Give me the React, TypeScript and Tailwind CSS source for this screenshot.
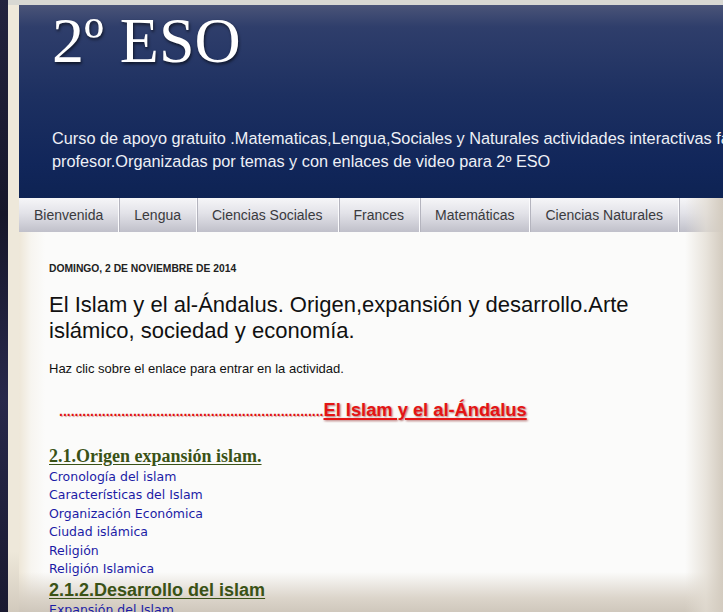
import * as React from "react";

// Menu tabs across the top of the blog
const tabs = ["Bienvenida", "Lengua", "Ciencias Sociales", "Frances", "Matemáticas", "Ciencias Naturales"];

// Activity links under the first heading
const links = [
  "Cronología del islam",
  "Características del Islam",
  "Organización Económica",
  "Ciudad islámica",
  "Religión",
  "Religión Islamica",
];

export default function App() {
  return (
    <div className="relative flex h-[612px] w-[723px] overflow-hidden bg-[#1b1b30] font-['Liberation_Sans',Arial,sans-serif]">
      {/* dark page background on the far left */}
      <div className="w-[8px] shrink-0 bg-[linear-gradient(to_bottom,#23233e,#17172a_35%,#28284a_65%,#1a1a30)]" />

      <div className="flex min-w-0 flex-1 flex-col">
        <div className="h-[5px] shrink-0 bg-[#d8d8d3]" />

        <div className="flex min-h-0 flex-1">
          {/* cream frame */}
          <div className="w-[11px] shrink-0 bg-[linear-gradient(to_bottom,#eee8da_90%,#d2cabd)]" />

          <div className="flex min-w-0 flex-1 flex-col">
            {/* Header */}
            <header className="h-[193px] shrink-0 overflow-hidden bg-[linear-gradient(to_bottom,#4a5478_0px,#2f3e6b_22px,#1d3061_90px,#11265a_160px,#0e2353)] pl-[33px]">
              <h1 className="pt-[4px] font-['Liberation_Serif','Times_New_Roman',serif] text-[64px] leading-[64px] text-white [text-shadow:1px_2px_3px_rgba(0,0,0,0.6)]">
                2º ESO
              </h1>
              <div className="mt-[54px] whitespace-nowrap text-[16.3px] leading-[23px] text-[#eef0f6]">
                <p>Curso de apoyo gratuito .Matematicas,Lengua,Sociales y Naturales actividades interactivas fáciles del</p>
                <p>profesor.Organizadas por temas y con enlaces de video para 2º ESO</p>
              </div>
            </header>

            {/* Navigation */}
            <nav className="flex h-[34px] shrink-0 bg-[linear-gradient(to_bottom,#f6f6f8,#e2e2e8_45%,#c0c0ca)]">
              {tabs.map((tab) => (
                <div
                  key={tab}
                  className="flex items-center border-r border-r-[#fbfbfd] px-[15px] text-[14px] text-[#3a3a3e] shadow-[1px_0_0_#b4b4be]"
                >
                  {tab}
                </div>
              ))}
            </nav>

            {/* Post body */}
            <main className="flex-1 bg-[linear-gradient(to_bottom,rgba(214,206,194,0)_340px,rgba(214,206,194,0.85)_366px,#c8c0b4),linear-gradient(to_right,#eee7d8_0px,#f7f5f0_12px,#fbfbfa_26px)] pl-[30px] pt-[30px]">
              <div className="text-[10.3px] font-bold uppercase leading-[14px] text-[#222]">
                Domingo, 2 de noviembre de 2014
              </div>

              <h2 className="mt-[16px] text-[22px] leading-[26px] text-[#111]">
                El Islam y el al-Ándalus. Origen,expansión y desarrollo.Arte
                <br />
                islámico, sociedad y economía.
              </h2>

              <p className="mt-[17px] text-[13px] leading-[16px] text-[#111]">
                Haz clic sobre el enlace para entrar en la actividad.
              </p>

              <div className="ml-[10px] mt-[22px] flex items-baseline leading-[22px]">
                <span className="text-[14px] font-bold text-[#e01010] [text-shadow:1px_1px_1px_rgba(150,0,0,0.35)]">
                  {".".repeat(68)}
                </span>
                <a className="text-[18.3px] font-bold text-[#e41414] underline decoration-2 underline-offset-2 [text-shadow:1px_1px_2px_rgba(120,0,0,0.55)]">
                  El Islam y el al-Ándalus
                </a>
              </div>

              <h3 className="mt-[23px] font-['Liberation_Serif','Times_New_Roman',serif] text-[18px] font-bold leading-[22px] text-[#3a5216] underline underline-offset-2">
                2.1.Origen expansión islam.
              </h3>

              <ul className="mt-[1px] font-['DejaVu_Sans',Verdana,sans-serif] text-[12.5px] leading-[18.4px] text-[#1c1ca6]">
                {links.map((l) => (
                  <li key={l}>{l}</li>
                ))}
              </ul>

              <h3 className="mt-[1px] text-[18px] font-bold leading-[22px] text-[#3a5216] underline underline-offset-2">
                2.1.2.Desarrollo del islam
              </h3>
              <div className="font-['DejaVu_Sans',Verdana,sans-serif] text-[12.5px] leading-[18.4px] text-[#1c1ca6]">
                Expansión del Islam
              </div>
            </main>
          </div>
        </div>
      </div>

      {/* frame shading over the right edge */}
      <div className="pointer-events-none absolute bottom-0 right-0 top-[198px] w-[38px] bg-[linear-gradient(to_right,rgba(240,236,228,0),rgba(226,220,210,0.75)_55%,#d3cbbf)]" />
    </div>
  );
}
